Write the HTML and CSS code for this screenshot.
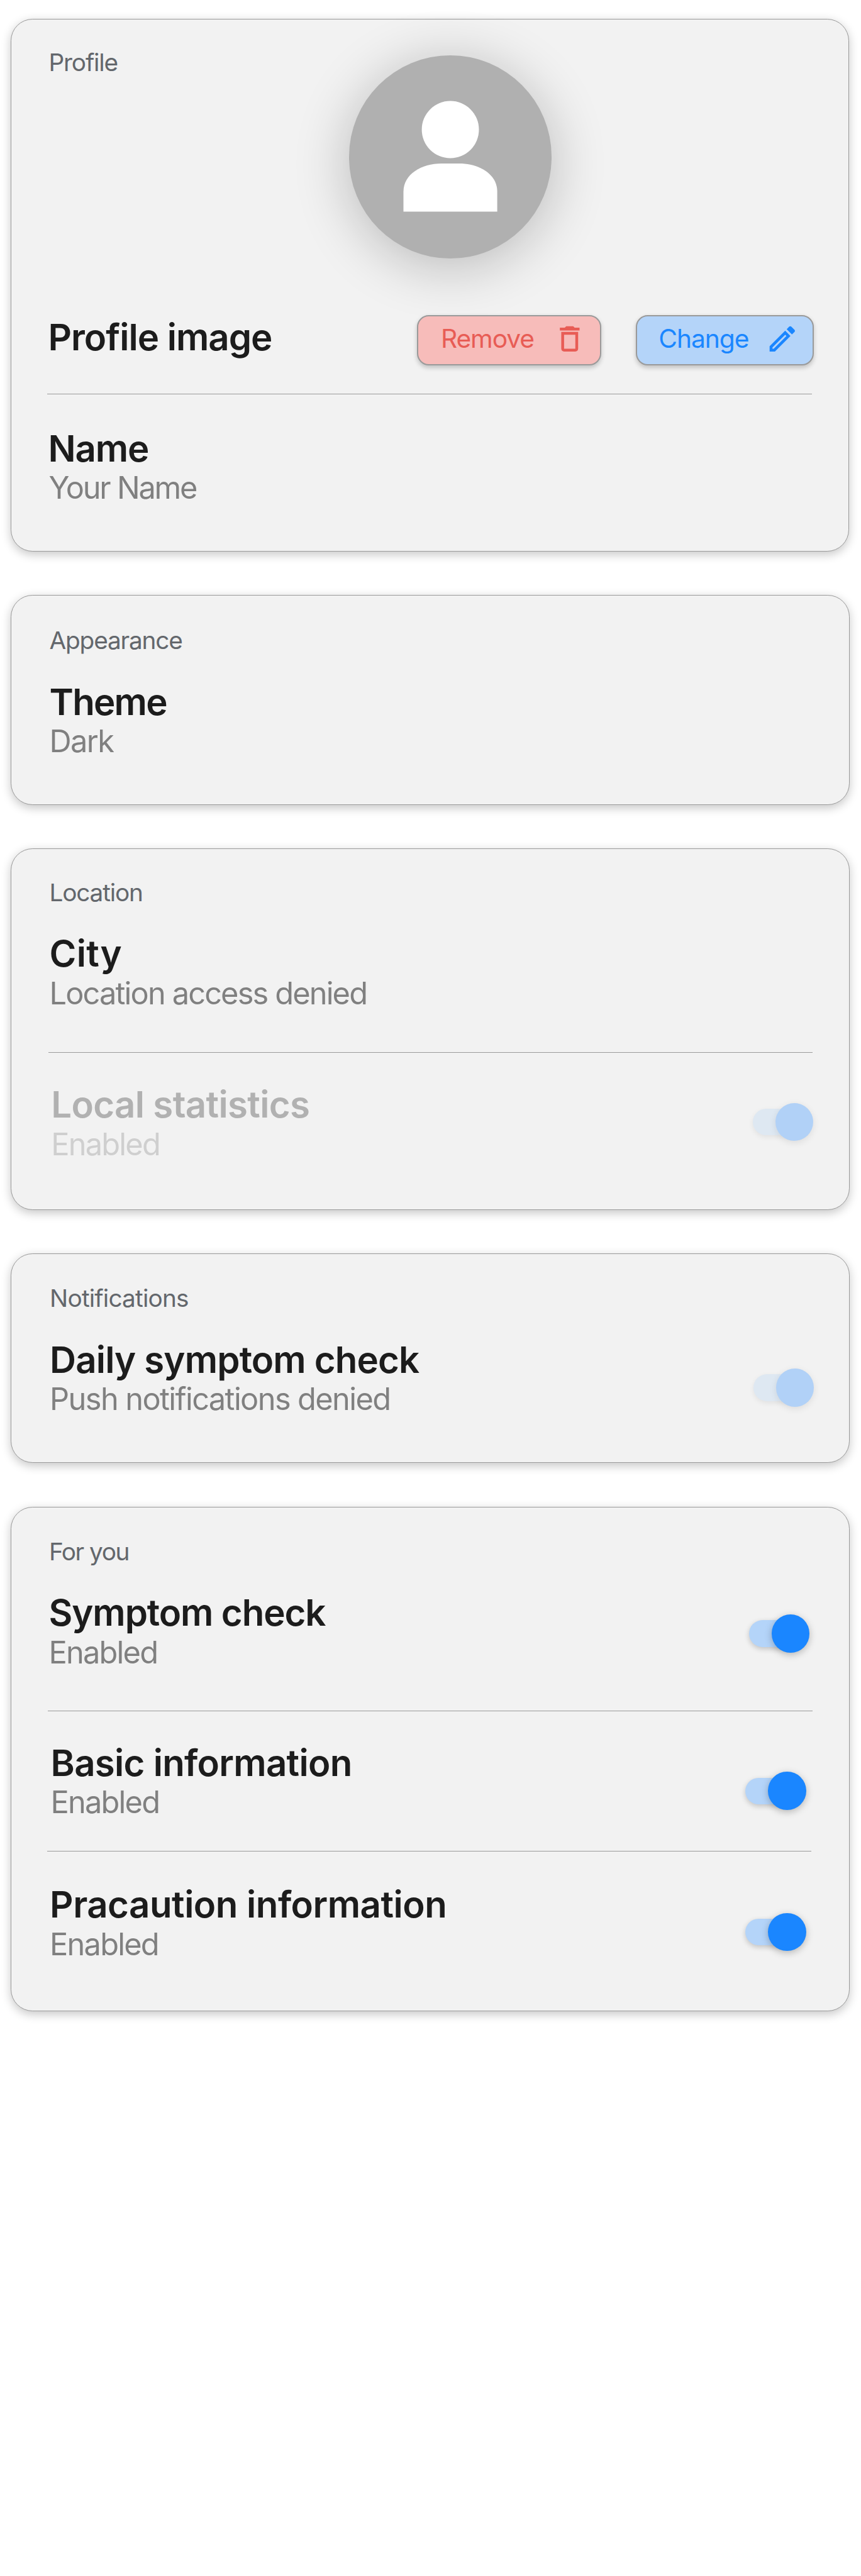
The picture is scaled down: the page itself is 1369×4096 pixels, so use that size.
FILE: index.html
```html
<!DOCTYPE html>
<html lang="en">
<head>
<meta charset="utf-8">
<title>Settings</title>
<link rel="stylesheet" href="styles.css">
</head>
<body>
<main class="page">
  <section class="card card-profile">
    <header class="profile-head">
      <h2 class="label">Profile</h2>
      <div class="avatar">
        <svg viewBox="0 0 324 324"><circle cx="162" cy="118.700" r="45.700" fill="#fff"/><path d="M87 250V218C87 190 116 173 148 173H176C208 173 237 190 237 218V250Z" fill="#fff"/></svg>
      </div>
    </header>
    <div class="image-row">
      <h3 class="title">Profile image</h3>
      <button class="btn btn-remove"><span class="btn-text">Remove</span><svg class="icon" viewBox="0 0 24 24"><path d="M6 19c0 1.100.900 2 2 2h8c1.100 0 2-.900 2-2V7H6v12zM8 9h8v10H8V9zm7.500-5l-1-1h-5l-1 1H5v2h14V4z"/></svg></button>
      <button class="btn btn-change"><span class="btn-text">Change</span><svg class="icon" viewBox="0 0 24 24"><path d="M14.060 9.020l.920.920L5.920 19H5v-.920l9.060-9.060M17.660 3c-.250 0-.510.100-.700.290l-1.830 1.830 3.750 3.750 1.830-1.830c.390-.390.390-1.020 0-1.410l-2.340-2.340c-.200-.200-.450-.290-.710-.290zm-3.600 3.190L3 17.250V21h3.750L17.810 9.940l-3.750-3.750z"/></svg></button>
    </div>
    <div class="item item-name">
      <div class="text">
        <h3 class="title">Name</h3>
        <p class="sub">Your Name</p>
      </div>
    </div>
  </section>

  <section class="card card-appearance">
    <h2 class="label">Appearance</h2>
    <div class="item item-theme">
      <div class="text">
        <h3 class="title">Theme</h3>
        <p class="sub">Dark</p>
      </div>
    </div>
  </section>

  <section class="card card-location">
    <h2 class="label">Location</h2>
    <div class="item item-city">
      <div class="text">
        <h3 class="title">City</h3>
        <p class="sub">Location access denied</p>
      </div>
    </div>
    <div class="item item-local disabled">
      <div class="text">
        <h3 class="title">Local statistics</h3>
        <p class="sub">Enabled</p>
      </div>
      <div class="toggle"></div>
    </div>
  </section>

  <section class="card card-notifications">
    <h2 class="label">Notifications</h2>
    <div class="item item-daily">
      <div class="text">
        <h3 class="title">Daily symptom check</h3>
        <p class="sub">Push notifications denied</p>
      </div>
      <div class="toggle toggle-muted"></div>
    </div>
  </section>

  <section class="card card-foryou">
    <h2 class="label">For you</h2>
    <div class="item item-symptom">
      <div class="text">
        <h3 class="title">Symptom check</h3>
        <p class="sub">Enabled</p>
      </div>
      <div class="toggle"></div>
    </div>
    <div class="item item-basic">
      <div class="text">
        <h3 class="title">Basic information</h3>
        <p class="sub">Enabled</p>
      </div>
      <div class="toggle"></div>
    </div>
    <div class="item item-precaution">
      <div class="text">
        <h3 class="title">Pracaution information</h3>
        <p class="sub">Enabled</p>
      </div>
      <div class="toggle"></div>
    </div>
  </section>
</main>
</body>
</html>
```
FILE: styles.css
```css
* { box-sizing: border-box; margin: 0; padding: 0; }
body { background: #fff; font-family: "Inter", "Liberation Sans", sans-serif; }

.page {
  zoom: 0.9942;
  width: 1377px;
  height: 4120px;
  padding: 30px 18px 0 17px;
  display: flex;
  flex-direction: column;
  gap: 70px;
  overflow: hidden;
}

/* Cards */
.card {
  flex: none;
  background: #f2f2f2;
  border: 1px solid #9a9a9a;
  border-radius: 35px;
  padding: 46px 58px 0 57px;
  box-shadow: 0 5px 15px rgba(0, 0, 0, .22);
}
.card-profile { height: 852px; margin-right: 1px; padding-top: 44px; }
.card-appearance { height: 335px; padding-top: 47px; }
.card-location { height: 578px; padding-top: 45px; }
.card-notifications { height: 335px; }
.card-foryou { height: 807px; }

/* Text */
.label { font-size: 39px; line-height: 48px; font-weight: 400; letter-spacing: -1.200px; color: #63676c; white-space: nowrap; padding-left: 4px; }
.title { font-size: 58.500px; line-height: 66px; font-weight: 600; letter-spacing: -1px; color: #1c1c1c; white-space: nowrap; }
.sub { font-size: 49px; line-height: 61px; font-weight: 400; letter-spacing: -1.800px; color: #808080; white-space: nowrap; }
.card-notifications .label { letter-spacing: -.830px; padding-left: 4.600px; }
.card-foryou .label { letter-spacing: -1.490px; padding-left: 3.400px; }

/* Profile header */
.profile-head { display: flex; height: 337px; }
.profile-head .label { width: 483px; padding-left: 3px; }
.avatar {
  width: 324px; height: 324px; margin-top: 14px;
  border-radius: 50%; background: #b0b0b0;
  box-shadow: 0 12px 88px rgba(0, 0, 0, .24);
}
.avatar svg { display: block; width: 324px; height: 324px; }

.image-row { display: flex; margin-top: 92px; height: 127px; border-bottom: 1px solid #9a9a9a; }
.image-row .title { width: 592px; padding: 3px 0 0 2px; }
.btn {
  display: flex; align-items: center; justify-content: space-between; flex: none;
  height: 80px; border: 2.100px solid #9a9a9a; border-radius: 19px;
  font-family: inherit; box-shadow: 0 4px 8px rgba(0, 0, 0, .2);
}
.btn-text { font-size: 41px; line-height: 50px; letter-spacing: -1.100px; white-space: nowrap; }
.btn-remove { width: 295px; margin-right: 55px; padding: 0 22px 3px 36px; background: #f7bcba; color: #e85c55; }
.btn-change { width: 285px; margin-right: -4px; padding: 0 22px 3px 34.500px; background: #b4d4f9; color: #1a86ff; }
.icon { width: 54px; height: 54px; fill: currentColor; flex: none; }

/* Rows */
.item { display: flex; justify-content: space-between; align-items: flex-start; }
.text { padding-top: 1px; padding-left: 4px; }

.item-name { padding-top: 52.700px; }
.item-name .text { padding-left: 2px; }
.item-name .title { letter-spacing: -1.160px; }
.item-name .sub { letter-spacing: -2.200px; padding-left: 1px; }

.item-theme { padding-top: 41px; }
.item-theme .title { letter-spacing: -1.780px; }
.item-theme .sub { letter-spacing: -1.600px; margin-top: -.700px; }

.item-city { margin-left: 2px; height: 232.500px; padding-top: 41px; border-bottom: 1px solid #9a9a9a; }
.item-city .text { padding-left: 2px; }
.item-city .title { letter-spacing: .390px; }
.item-city .sub { letter-spacing: -1.860px; }
.item-local { padding-top: 49.500px; }
.item-local .text { padding-left: 6.800px; }
.item-local .title { letter-spacing: -.660px; }
.item-local .toggle { margin: 31px -1px 0 0; }

.item-daily { padding-top: 41.700px; }
.item-daily .text { padding-left: 4.600px; }
.item-daily .title { letter-spacing: -.850px; }
.item-daily .sub { letter-spacing: -1.610px; margin-top: -.700px; }
.item-daily .toggle { margin: 47px -2px 0 0; }

.item-symptom { margin-left: 1px; height: 231.500px; padding-top: 41px; border-bottom: 1px solid #9a9a9a; }
.item-symptom .text { padding-left: 2px; }
.item-symptom .title { letter-spacing: -1.100px; }
.item-symptom .toggle { margin: 36px 5px 0 0; }
.item-basic { margin-right: 2px; height: 225px; padding-top: 49.500px; border-bottom: 1px solid #9a9a9a; }
.item-basic .text { padding-left: 6px; }
.item-basic .title { letter-spacing: -.710px; }
.item-basic .toggle { margin: 48px 9px 0 0; }
.item-precaution { padding-top: 51px; }
.item-precaution .text { padding-left: 4.600px; }
.item-precaution .title { letter-spacing: -.490px; }
.item-precaution .toggle { margin: 47px 11px 0 0; }

/* Toggle: the thumb overhangs its track */
.toggle { position: relative; width: 97px; height: 61px; flex: none; }
.toggle::before {
  content: ""; position: absolute; left: 0; top: 9.500px; width: 80px; height: 42.500px;
  border-radius: 22px; background: #b4d4f9; box-shadow: 0 3px 9px rgba(0, 0, 0, .2);
}
.toggle::after {
  content: ""; position: absolute; right: 0; top: 0; width: 61px; height: 61px;
  border-radius: 50%; background: #1a86ff; box-shadow: 0 3px 12px rgba(0, 0, 0, .25);
}

/* Unavailable settings */
.disabled .title { color: #b1b1b1; }
.disabled .sub { color: #cfcfcf; }
.disabled .toggle::before, .toggle-muted::before { background: #dee8f2; box-shadow: 0 3px 9px rgba(0, 0, 0, .07); }
.disabled .toggle::after, .toggle-muted::after { background: #b1d1f7; box-shadow: 0 3px 12px rgba(0, 0, 0, .09); }
```
